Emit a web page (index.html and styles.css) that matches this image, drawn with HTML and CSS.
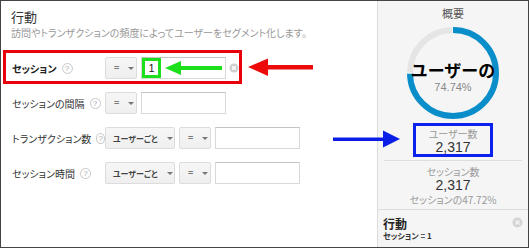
FILE: index.html
```html
<!DOCTYPE html>
<html lang="ja">
<head>
<meta charset="utf-8">
<link rel="stylesheet" href="styles.css">
</head>
<body>
<div class="frame">
  <section class="main">
    <h1 class="title">行動</h1>
    <p class="desc">訪問やトランザクションの頻度によってユーザーをセグメント化します。</p>
    <div class="rows">
      <div class="row row-hl">
        <div class="label"><span class="strong">セッション</span><i class="help">?</i></div>
        <div class="ctrls">
          <div class="btn op"><span class="eq">=</span><b class="caret"></b></div>
          <div class="input"><span class="val">1</span></div>
          <svg class="clear" width="10" height="10" viewBox="0 0 10 10"><circle cx="5" cy="5" r="4.5" fill="#cfcfcf"/><path d="M3.2 3.2 L6.8 6.8 M6.8 3.2 L3.2 6.8" stroke="#fff" stroke-width="1.3"/></svg>
        </div>
      </div>
      <div class="row">
        <div class="label"><span>セッションの間隔</span><i class="help">?</i></div>
        <div class="ctrls">
          <div class="btn op"><span class="eq">=</span><b class="caret"></b></div>
          <div class="input"></div>
        </div>
      </div>
      <div class="row">
        <div class="label"><span>トランザクション数</span><i class="help">?</i></div>
        <div class="ctrls">
          <div class="btn per"><span class="per-t">ユーザーごと</span><b class="caret"></b></div>
          <div class="btn op"><span class="eq">=</span><b class="caret"></b></div>
          <div class="input"></div>
        </div>
      </div>
      <div class="row">
        <div class="label"><span>セッション時間</span><i class="help">?</i></div>
        <div class="ctrls">
          <div class="btn per"><span class="per-t">ユーザーごと</span><b class="caret"></b></div>
          <div class="btn op"><span class="eq">=</span><b class="caret"></b></div>
          <div class="input"></div>
        </div>
      </div>
    </div>
  </section>

  <aside class="side">
    <div class="summary">
      <div class="side-title">概要</div>
      <div class="donut">
        <svg width="92" height="92" viewBox="0 0 92 92">
          <circle cx="46" cy="46" r="43" fill="none" stroke="#e5e5e5" stroke-width="6" pathLength="100" stroke-dasharray="0 75.2 24.4 0.4" transform="rotate(-90 46 46)"/>
          <circle cx="46" cy="46" r="43" fill="none" stroke="#0a8ec9" stroke-width="6" pathLength="100" stroke-dasharray="74.74 25.26" transform="rotate(-90 46 46)"/>
        </svg>
        <div class="donut-label">
          <div class="big">ユーザーの</div>
          <div class="pct">74.74%</div>
        </div>
      </div>
      <div class="stat stat-hl">
        <div class="stat-l">ユーザー数</div>
        <div class="stat-n">2,317</div>
      </div>
      <div class="sep"></div>
      <div class="stat">
        <div class="stat-l">セッション数</div>
        <div class="stat-n">2,317</div>
        <div class="stat-l">セッションの47.72%</div>
      </div>
    </div>
    <div class="seg">
      <div class="seg-t">行動</div>
      <div class="seg-s">セッション = 1</div>
      <svg class="seg-x" width="11" height="11" viewBox="0 0 11 11"><circle cx="5.5" cy="5.5" r="5" fill="#d4d4d4"/><path d="M3.5 3.5 L7.5 7.5 M7.5 3.5 L3.5 7.5" stroke="#f5f5f5" stroke-width="1.4"/></svg>
    </div>
  </aside>

  <svg class="anno" width="529" height="248" viewBox="0 0 529 248">
    <rect x="266" y="65" width="47" height="4.5" fill="#ec0a0a"/>
    <polygon points="248,67 268,58.5 268,76" fill="#ec0a0a"/>
    <rect x="179" y="66" width="43" height="4" fill="#1de01d"/>
    <polygon points="165,68 181,61 181,75" fill="#1de01d"/>
    <rect x="333" y="137.5" width="52" height="3.5" fill="#0b1ee8"/>
    <polygon points="400,139 383,130.5 383,147.5" fill="#0b1ee8"/>
  </svg>
</div>
</body>
</html>
```
FILE: styles.css
```css
* { box-sizing: border-box; margin: 0; padding: 0; }
html, body { width: 529px; height: 248px; overflow: hidden; background: #fff; }
body {
  font-family: "Noto Sans CJK JP", "Noto Sans", sans-serif;
  font-feature-settings: "palt";
  color: #333;
}
.frame {
  position: relative;
  width: 529px;
  height: 248px;
  border: 1px solid #444;
  display: flex;
}
.main { flex: 1; padding: 7px 0 0 5px; }
.title { font-size: 13px; font-weight: 400; line-height: 18px; padding-left: 5px; color: #333; }
.desc { font-size: 10px; line-height: 14px; padding-left: 5px; color: #999; white-space: nowrap; }
.rows { margin-top: 13px; display: flex; flex-direction: column; gap: 7px; }
.row { display: flex; align-items: center; height: 28px; padding: 4px 0 2px 6px; }
.row-hl { width: 233px; outline: 3px solid #e8000b; }
.label { width: 93px; display: flex; align-items: center; font-size: 10px; color: #333; white-space: nowrap; }
.strong { font-weight: 700; color: #222; }
.help {
  font-style: normal;
  width: 11px; height: 11px;
  margin-left: 5px;
  border: 1px solid #c8c8c8;
  border-radius: 50%;
  font-family: "Liberation Sans", sans-serif;
  font-size: 8px; line-height: 9px;
  color: #aaa; text-align: center;
}
.ctrls { display: flex; align-items: center; gap: 4px; }
.btn {
  height: 22px;
  display: flex; align-items: center;
  background: linear-gradient(#f6f6f6, #efefef);
  border: 1px solid #dcdcdc;
  border-radius: 2px;
  color: #666;
}
.op { width: 32px; padding-left: 8px; }
.per { width: 70px; padding-left: 7px; }
.eq { font-family: "Liberation Sans", sans-serif; font-size: 9px; font-weight: 700; color: #777; width: 14px; }
.per-t { font-size: 8px; font-weight: 700; color: #444; width: 54px; }
.caret { width: 0; height: 0; border-left: 3px solid transparent; border-right: 3px solid transparent; border-top: 3px solid #777; }
.input {
  width: 85px; height: 22px;
  background: #fff;
  border: 1px solid #d9d9d9;
  border-top-color: #c4c4c4;
}
.val {
  display: block;
  width: 19px; height: 20px;
  border: 3px solid #1de01d;
  font-family: "Liberation Sans", sans-serif;
  font-size: 11px; line-height: 14px;
  color: #222; text-align: center;
}
.clear { margin-left: -1px; }

.side {
  width: 151px;
  border-left: 1px solid #dcdcdc;
  background: #f5f5f5;
  display: flex; flex-direction: column;
}
.summary { display: flex; flex-direction: column; align-items: center; }
.side-title { padding-top: 5px; font-size: 11px; line-height: 14px; color: #555; }
.donut { position: relative; width: 92px; height: 92px; margin-top: 7px; }
.donut svg { display: block; }
.donut-label { position: absolute; left: -10px; right: -10px; top: 33px; text-align: center; }
.big { font-size: 17px; font-weight: 700; line-height: 20px; color: #000; font-feature-settings: normal; }
.pct { font-family: "Liberation Sans", sans-serif; font-size: 11px; line-height: 14px; color: #888; }
.stat { text-align: center; }
.stat-hl { margin-top: 4px; width: 80px; height: 34px; border: 3px solid #0b22ee; padding-top: 1px; }
.stat-l { font-size: 10px; line-height: 13px; color: #999; white-space: nowrap; }
.stat-n { font-family: "Liberation Sans", sans-serif; font-size: 14px; line-height: 15px; color: #333; }
.sep { width: 138px; height: 1px; background: #dedede; margin: 3px 0 4px; }
.seg {
  position: relative;
  margin-top: 3px;
  border-top: 1px solid #dedede;
  padding: 7px 0 0 5px;
  flex: 1;
}
.seg-t { font-size: 12px; font-weight: 700; line-height: 14px; color: #222; }
.seg-s { font-size: 8px; font-weight: 700; line-height: 10px; color: #333; }
.seg-x { position: absolute; right: 5px; top: 7px; }
.anno { position: absolute; left: -1px; top: -1px; pointer-events: none; }
```
